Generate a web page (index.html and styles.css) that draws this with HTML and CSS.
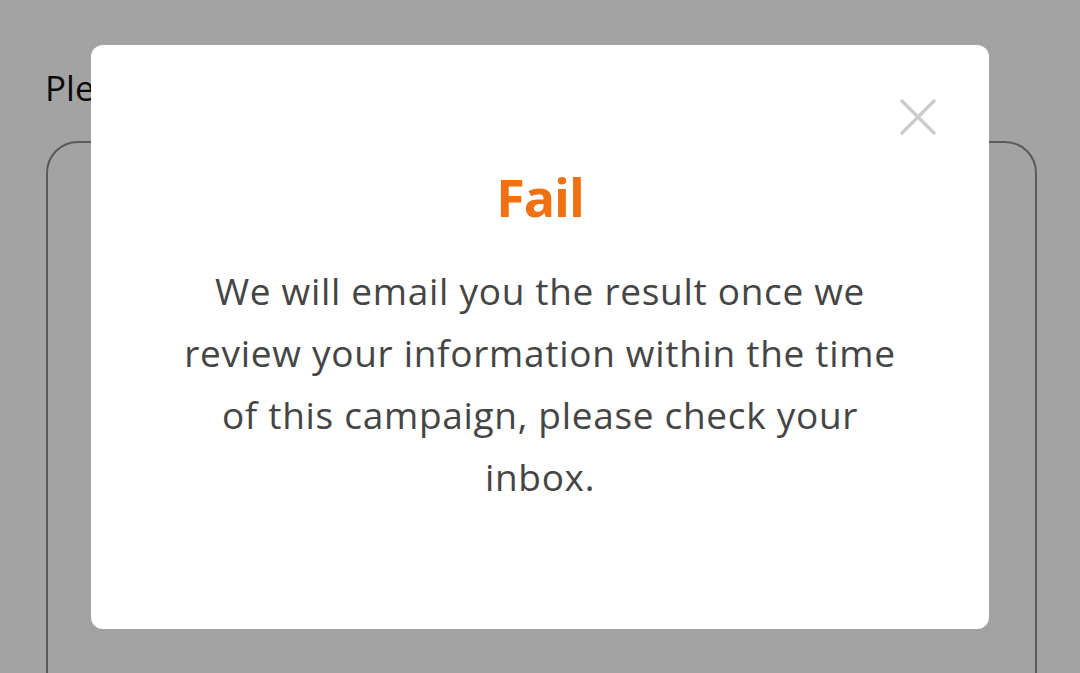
FILE: index.html
```html
<!DOCTYPE html>
<html lang="en">
<head>
    <meta charset="UTF-8">
    <title>Result</title>
    <link rel="stylesheet" href="styles.css">
</head>
<body>

<div class="page">
    <p class="page-title">Please upload your information</p>
    <div class="upload-box"></div>
</div>

<div class="overlay">
    <div class="dialog">
        <button class="close-btn" aria-label="Close">
            <svg width="38" height="38" viewBox="0 0 38 38">
                <path d="M2 2 L36 36 M36 2 L2 36" stroke="#cccccc" stroke-width="3.4" stroke-linecap="butt" fill="none"/>
            </svg>
        </button>
        <h2 class="dialog-title">Fail</h2>
        <p class="dialog-text">We will email you the result once we review your information within the time of this campaign, please check your inbox.</p>
    </div>
</div>

</body>
</html>
```

FILE: styles.css
```css
* {
    box-sizing: border-box;
}

body {
    margin: 0;
    font-family: "Open Sans", "Noto Sans", sans-serif;
    background: #fff;
    height: 673px;
    overflow: hidden;
}

.page {
    padding: 64px 43px 0 46px;
}

.page-title {
    margin: 0 0 0 -1px;
    font-size: 35px;
    line-height: 48px;
    color: #111;
}

.upload-box {
    margin-top: 29px;
    height: 600px;
    border: 2px solid #8d8d8d;
    border-radius: 32px;
}

.overlay {
    position: fixed;
    inset: 0;
    background: rgba(0, 0, 0, 0.36);
    display: flex;
    justify-content: center;
    align-items: flex-start;
    padding-top: 45px;
}

.dialog {
    position: relative;
    width: 898px;
    height: 584px;
    background: #fff;
    border-radius: 12px;
    padding: 117px 79px 0;
    text-align: center;
}

.close-btn {
    position: absolute;
    top: 53px;
    right: 52px;
    padding: 0;
    border: none;
    background: none;
    cursor: pointer;
}

.close-btn svg {
    display: block;
}

.dialog-title {
    margin: 0;
    font-size: 52px;
    line-height: 70px;
    font-weight: 700;
    letter-spacing: -1px;
    color: #f07012;
}

.dialog-text {
    margin: 28px 0 0;
    font-size: 37px;
    line-height: 62px;
    letter-spacing: 0.7px;
    color: #454545;
}
```
